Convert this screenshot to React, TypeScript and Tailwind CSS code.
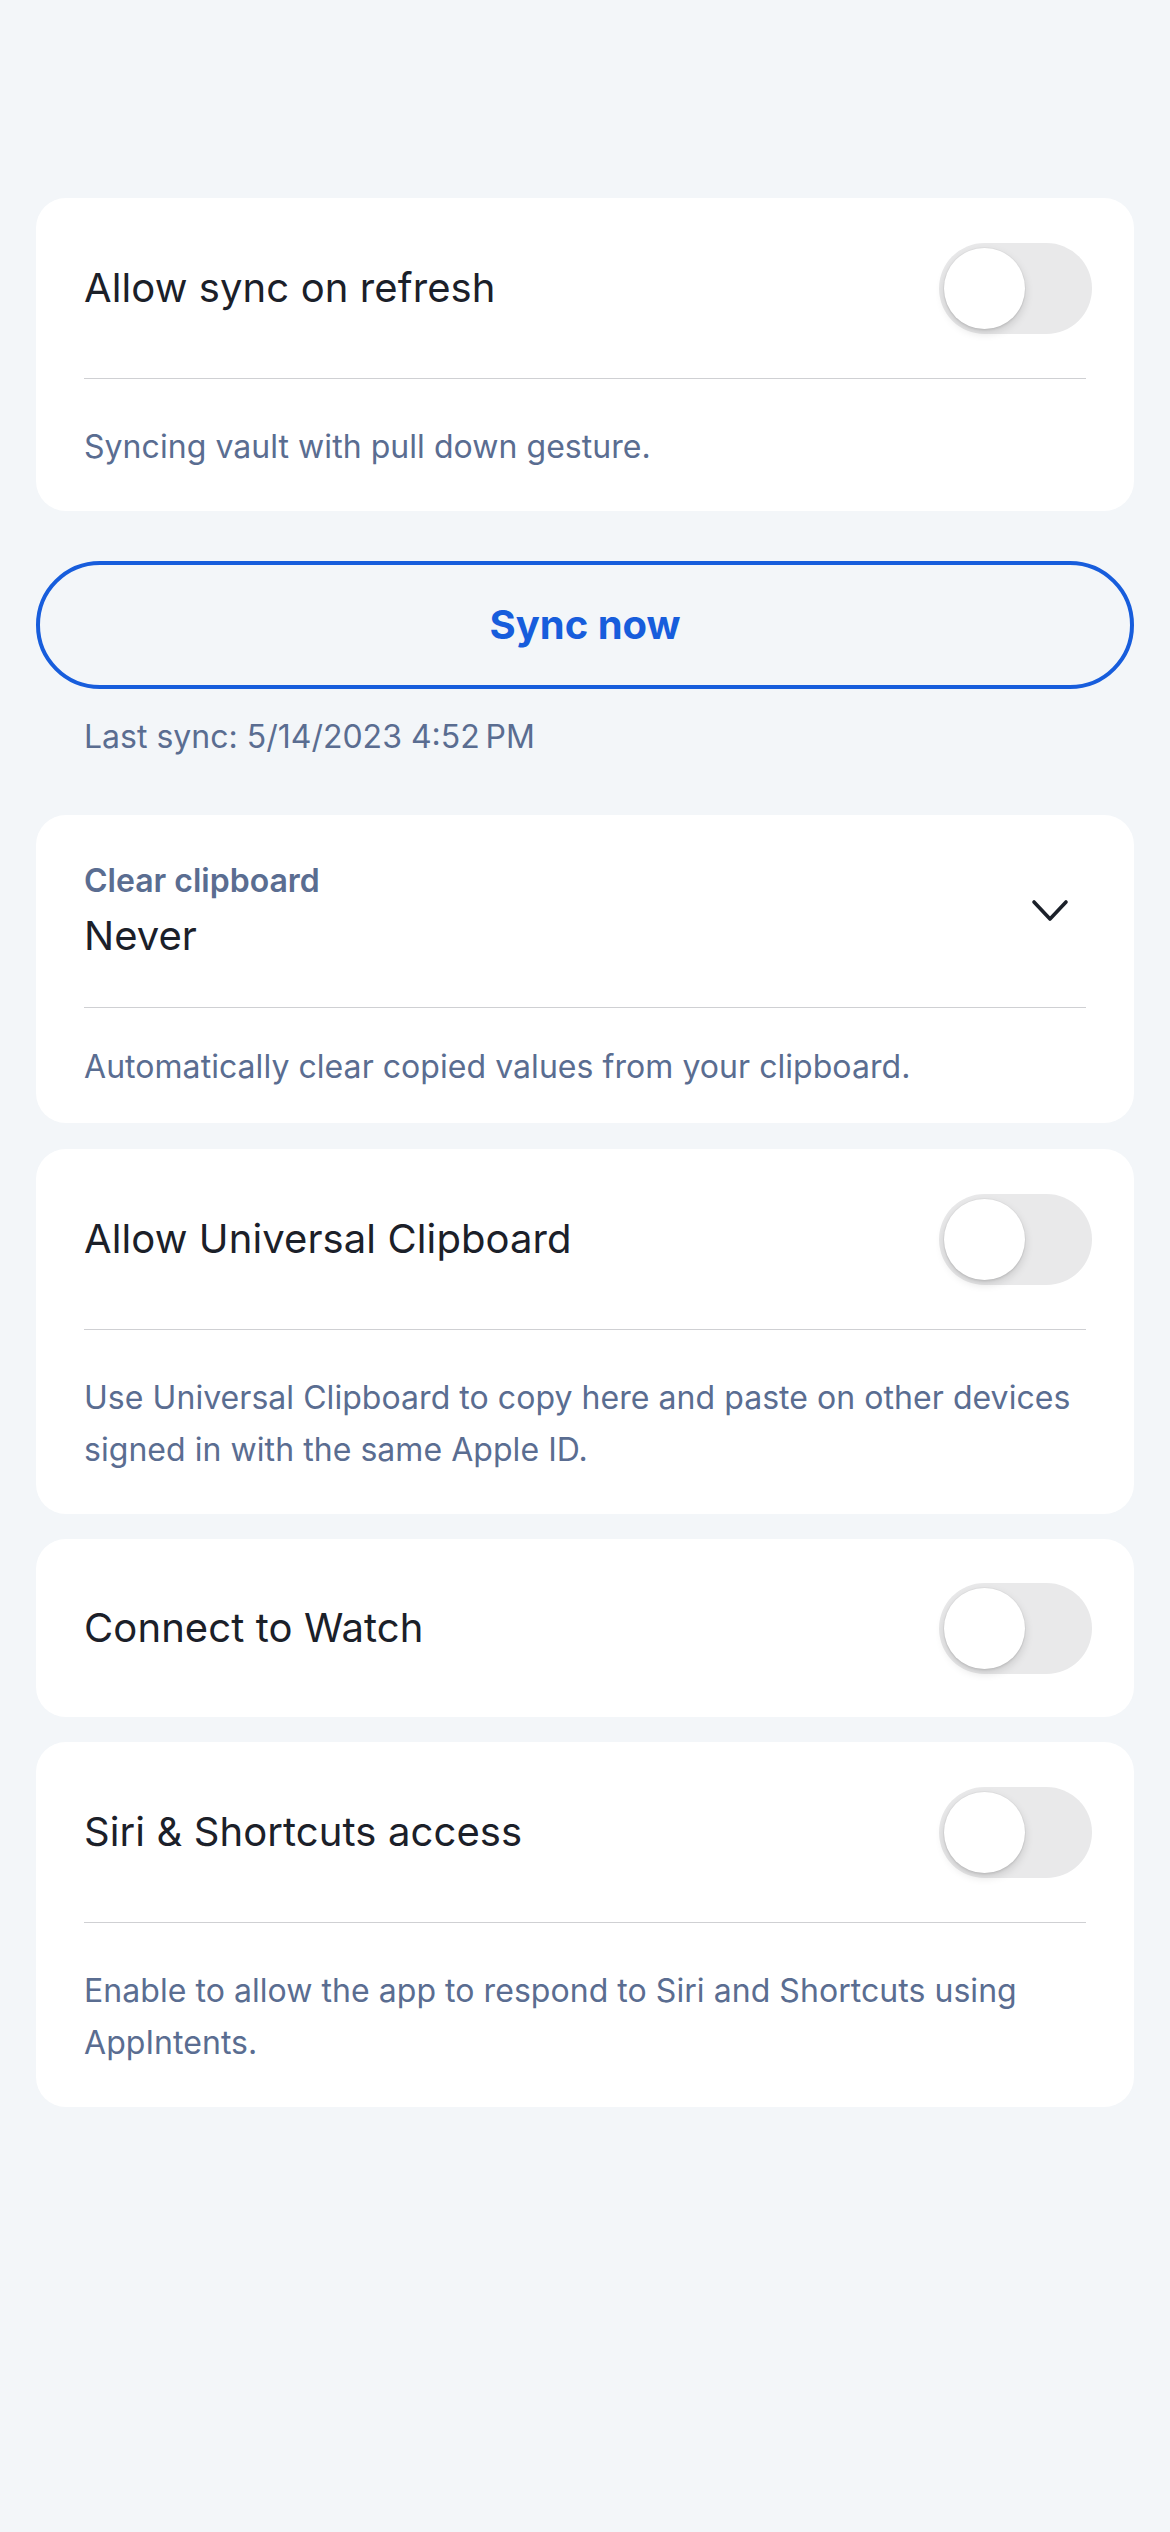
import React from "react";

function Toggle() {
  return (
    <div className="relative -mr-[6px] h-[91px] w-[153px] shrink-0 rounded-full bg-[#e9e9ea]">
      <div className="absolute left-[5px] top-[5px] h-[81px] w-[81px] rounded-full bg-white shadow-[0_4px_10px_rgba(0,0,0,0.14),0_2px_2px_rgba(0,0,0,0.06),0_0_0_1px_rgba(0,0,0,0.03)]" />
    </div>
  );
}

function Divider() {
  return <div className="h-px bg-[#cfd0d3]" />;
}

function Sub({ children, pt = "pt-[42px]", pb = "pb-[38px]" }: { children: React.ReactNode; pt?: string; pb?: string }) {
  return (
    <div className={`${pt} ${pb} text-[32px] leading-[52px] tracking-[0.05px] text-[#5a6d91]`}>{children}</div>
  );
}

function ToggleRow({ title, h = "h-[180px]" }: { title: string; h?: string }) {
  return (
    <div className={`flex ${h} items-center justify-between`}>
      <span className="text-[40px] leading-[52px] tracking-[0.1px] text-[#1b2029]">{title}</span>
      <Toggle />
    </div>
  );
}

export default function App() {
  return (
    <div className="min-h-[2532px] bg-[#f3f6f9] px-[36px] pt-[198px] font-['Inter',sans-serif] antialiased">
      <div className="rounded-[30px] bg-white px-[48px]">
        <ToggleRow title="Allow sync on refresh" />
        <Divider />
        <Sub>Syncing vault with pull down gesture.</Sub>
      </div>

      <div className="mt-[50px] flex h-[128px] items-center justify-center rounded-full border-[4px] border-[#175ddc]">
        <span className="text-[40px] font-bold text-[#175ddc]">Sync now</span>
      </div>
      <div className="mt-[22px] px-[48px] text-[32px] leading-[52px] text-[#5a6d91]">
        Last sync: 5/14/2023 4:52{"\u2009"}PM
      </div>

      <div className="mt-[52px] rounded-[30px] bg-white px-[48px]">
        <div className="flex h-[192px] items-center justify-between">
          <div className="flex flex-col">
            <span className="text-[32px] font-semibold leading-[50px] text-[#5a6d91]">Clear clipboard</span>
            <span className="text-[40px] leading-[60px] text-[#1b2029]">Never</span>
          </div>
          <svg width="40" height="40" viewBox="0 0 40 40" className="mr-[16px]" fill="none">
            <path d="M4 11 L20 28 L36 11" stroke="#1b2029" strokeWidth="3.6" strokeLinecap="round" strokeLinejoin="round" />
          </svg>
        </div>
        <Divider />
        <Sub pt="pt-[33px]" pb="pb-[30px]">Automatically clear copied values from your clipboard.</Sub>
      </div>

      <div className="mt-[26px] rounded-[30px] bg-white px-[48px]">
        <ToggleRow title="Allow Universal Clipboard" />
        <Divider />
        <Sub>
          Use Universal Clipboard to copy here and paste on other devices
          <br />
          signed in with the same Apple ID.
        </Sub>
      </div>

      <div className="mt-[25px] rounded-[30px] bg-white px-[48px]">
        <ToggleRow title="Connect to Watch" h="h-[178px]" />
      </div>

      <div className="mt-[25px] rounded-[30px] bg-white px-[48px]">
        <ToggleRow title="Siri & Shortcuts access" />
        <Divider />
        <Sub>
          Enable to allow the app to respond to Siri and Shortcuts using
          <br />
          AppIntents.
        </Sub>
      </div>
    </div>
  );
}
